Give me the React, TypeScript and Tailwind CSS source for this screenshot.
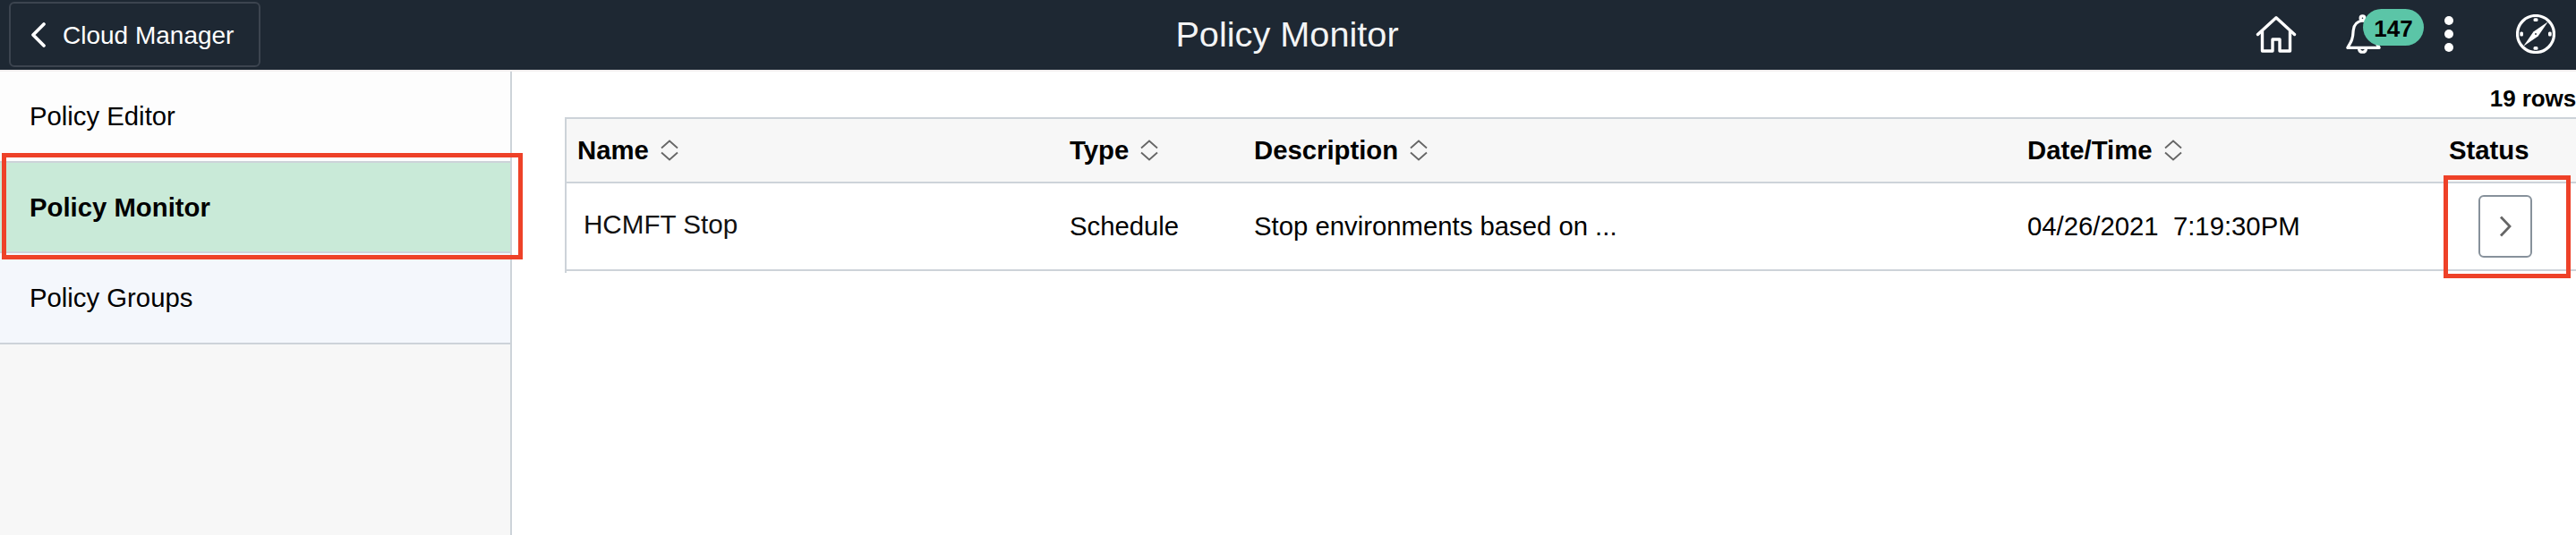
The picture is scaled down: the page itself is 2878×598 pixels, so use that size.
import React from "react";

const navItems = [
  { label: "Policy Editor", row: "h-[102px] bg-[#fdfdfd] font-normal" },
  { label: "Policy Monitor", row: "h-[101px] bg-[#c9ead8] font-bold" },
  { label: "Policy Groups", row: "h-[102px] bg-[#f4f7fc] font-normal" },
];

function HomeIcon() {
  return (
    <svg className="mt-[16px] h-[44px] w-[48px] shrink-0" viewBox="0 0 48 44" fill="none" stroke="#fff" strokeWidth="3.4" strokeLinejoin="round" strokeLinecap="round">
      <path d="M3.5 22.5 24 3.8 44.5 22.5" />
      <path d="M8.5 19V41H20V28H28V41H39.5V19" />
    </svg>
  );
}

function BellIcon() {
  return (
    <svg className="h-[48px] w-[44px]" viewBox="0 0 44 48" fill="none" stroke="#fff" strokeWidth="3.2" strokeLinejoin="round" strokeLinecap="round">
      <circle cx="19.5" cy="6.3" r="2.4" />
      <path d="M19.5 9C13 10 9.6 14 9.2 20C8.8 29 7.5 32 2.8 39.3H38.200C33.5 32 30.2 29 29.8 20C29.4 14 26 10 19.5 9Z" />
      <path d="M15.6 41C16 45.3 23 45.3 23.4 41" />
    </svg>
  );
}

function CompassIcon() {
  return (
    <svg className="mt-[16px] h-[44px] w-[44px] shrink-0" viewBox="0 0 44 44" fill="none">
      <circle cx="22" cy="22" r="20.5" stroke="#fff" strokeWidth="3.2" />
      <g fill="#fff">
        <rect x="19.5" y="4.3" width="5" height="3.7" rx="1.5" />
        <rect x="19.5" y="36" width="5" height="3.7" rx="1.5" />
        <rect x="4.3" y="19.5" width="3.7" height="5" rx="1.5" />
        <rect x="36" y="19.5" width="3.7" height="5" rx="1.5" />
        <path d="M35.8 8.2 24.6 24.6 8.2 35.8 19.4 19.4Z" />
      </g>
      <circle cx="22" cy="22" r="0.9" fill="#1e2833" />
    </svg>
  );
}

function SortIcon() {
  return (
    <svg className="ml-[13px] h-[24px] w-[20px]" viewBox="0 0 20 24" fill="none" stroke="#666" strokeWidth="1.8">
      <path d="M1 9.5 10 1.5 19 9.5M1 14.5 10 22.5 19 14.5" />
    </svg>
  );
}

function Heading({ children }: { children: string }) {
  return (
    <div className="flex h-[22px] items-center">
      <span>{children}</span>
      <SortIcon />
    </div>
  );
}

export default function App() {
  return (
    <div className="relative flex h-[598px] w-[2878px] flex-col overflow-hidden bg-white font-['Liberation_Sans',Arial,sans-serif] text-[29.3px] leading-[34px] text-black">
      <header className="grid h-[80px] shrink-0 grid-cols-3 border-b-2 border-[#f1eeee] bg-[#1e2833]">
        <div className="pt-[2px] pl-[10px]">
          <button className="flex h-[73px] w-[281px] items-center rounded-[6px] border-2 border-[#3c444f] pl-[22px] text-[28px] text-white">
            <svg className="h-[30px] w-[20px]" viewBox="0 0 20 30" fill="none" stroke="#fff" strokeWidth="3.8" strokeLinecap="round" strokeLinejoin="round">
              <path d="M15 3 3 15 15 27" />
            </svg>
            <span className="ml-[16px] pt-[2px]">Cloud Manager</span>
          </button>
        </div>
        <h1 className="pt-[15px] pr-[2px] text-center text-[39.7px] leading-[46px] text-[#f3f4f5]">Policy Monitor</h1>
        <div className="flex items-start justify-end pr-[23px]">
          <HomeIcon />
          <div className="relative mt-[14px] ml-[53px] h-[48px] w-[88px] shrink-0">
            <BellIcon />
            <span className="absolute -top-[4px] left-[20px] flex h-[41px] w-[68px] items-center justify-center rounded-full bg-[#5bc5a7] pt-[2px] text-[26px] font-bold">147</span>
          </div>
          <svg className="mt-[17px] ml-[23px] h-[42px] w-[10px] shrink-0" viewBox="0 0 10 42" fill="#fff">
            <circle cx="5" cy="6" r="5" />
            <circle cx="5" cy="21" r="5" />
            <circle cx="5" cy="36" r="5" />
          </svg>
          <div className="ml-[70px]">
            <CompassIcon />
          </div>
        </div>
      </header>

      <div className="flex min-h-0 flex-1">
        <nav className="w-[572px] shrink-0 border-r-2 border-[#cdd3d9] bg-[#f7f7f7]">
          {navItems.map((item) => (
            <div key={item.label} className={`flex items-center border-b-2 border-[#cdd3d9] pl-[33px] ${item.row}`}>
              {item.label}
            </div>
          ))}
        </nav>

        <main className="flex min-w-0 flex-1 flex-col pl-[59px]">
          <div className="flex h-[51px] shrink-0 justify-end pt-[13px] text-[26px] font-bold whitespace-nowrap">
            <span className="tracking-[-0.1px]">19 rows</span>
          </div>
          <section className="border-l-2 border-[#cdd3d9]">
            <div className="grid h-[74px] grid-cols-[550px_206px_864px_471px_1fr] items-center border-y-2 border-[#cdd3d9] bg-[#f7f7f7] pl-[12px] font-bold">
              <Heading>Name</Heading>
              <Heading>Type</Heading>
              <Heading>Description</Heading>
              <Heading>Date/Time</Heading>
              <div>Status</div>
            </div>
            <div className="grid h-[98px] grid-cols-[550px_206px_864px_471px_1fr] items-center border-b-2 border-[#cdd3d9] pl-[12px]">
              <div className="pb-[5px] pl-[7px] text-[29.6px] text-[#111]">HCMFT Stop</div>
              <div>Schedule</div>
              <div>Stop environments based on ...</div>
              <div className="whitespace-pre">04/26/2021  7:19:30PM</div>
              <div className="pl-[33px]">
                <button className="flex h-[70px] w-[60px] items-center justify-center rounded-[6px] border-2 border-[#87919b]">
                  <svg className="h-[24px] w-[14px]" viewBox="0 0 14 24" fill="none" stroke="#666" strokeWidth="2.8">
                    <path d="M2 1.5 12 12 2 22.5" />
                  </svg>
                </button>
              </div>
            </div>
            <div className="h-[2px]" />
          </section>
        </main>
      </div>

      <div className="pointer-events-none absolute top-[171px] left-[2px] h-[119px] w-[582px] border-[5px] border-[#ee4128]" />
      <div className="pointer-events-none absolute top-[196px] left-[2730px] h-[115px] w-[142px] border-[5px] border-[#ee4128]" />
    </div>
  );
}
